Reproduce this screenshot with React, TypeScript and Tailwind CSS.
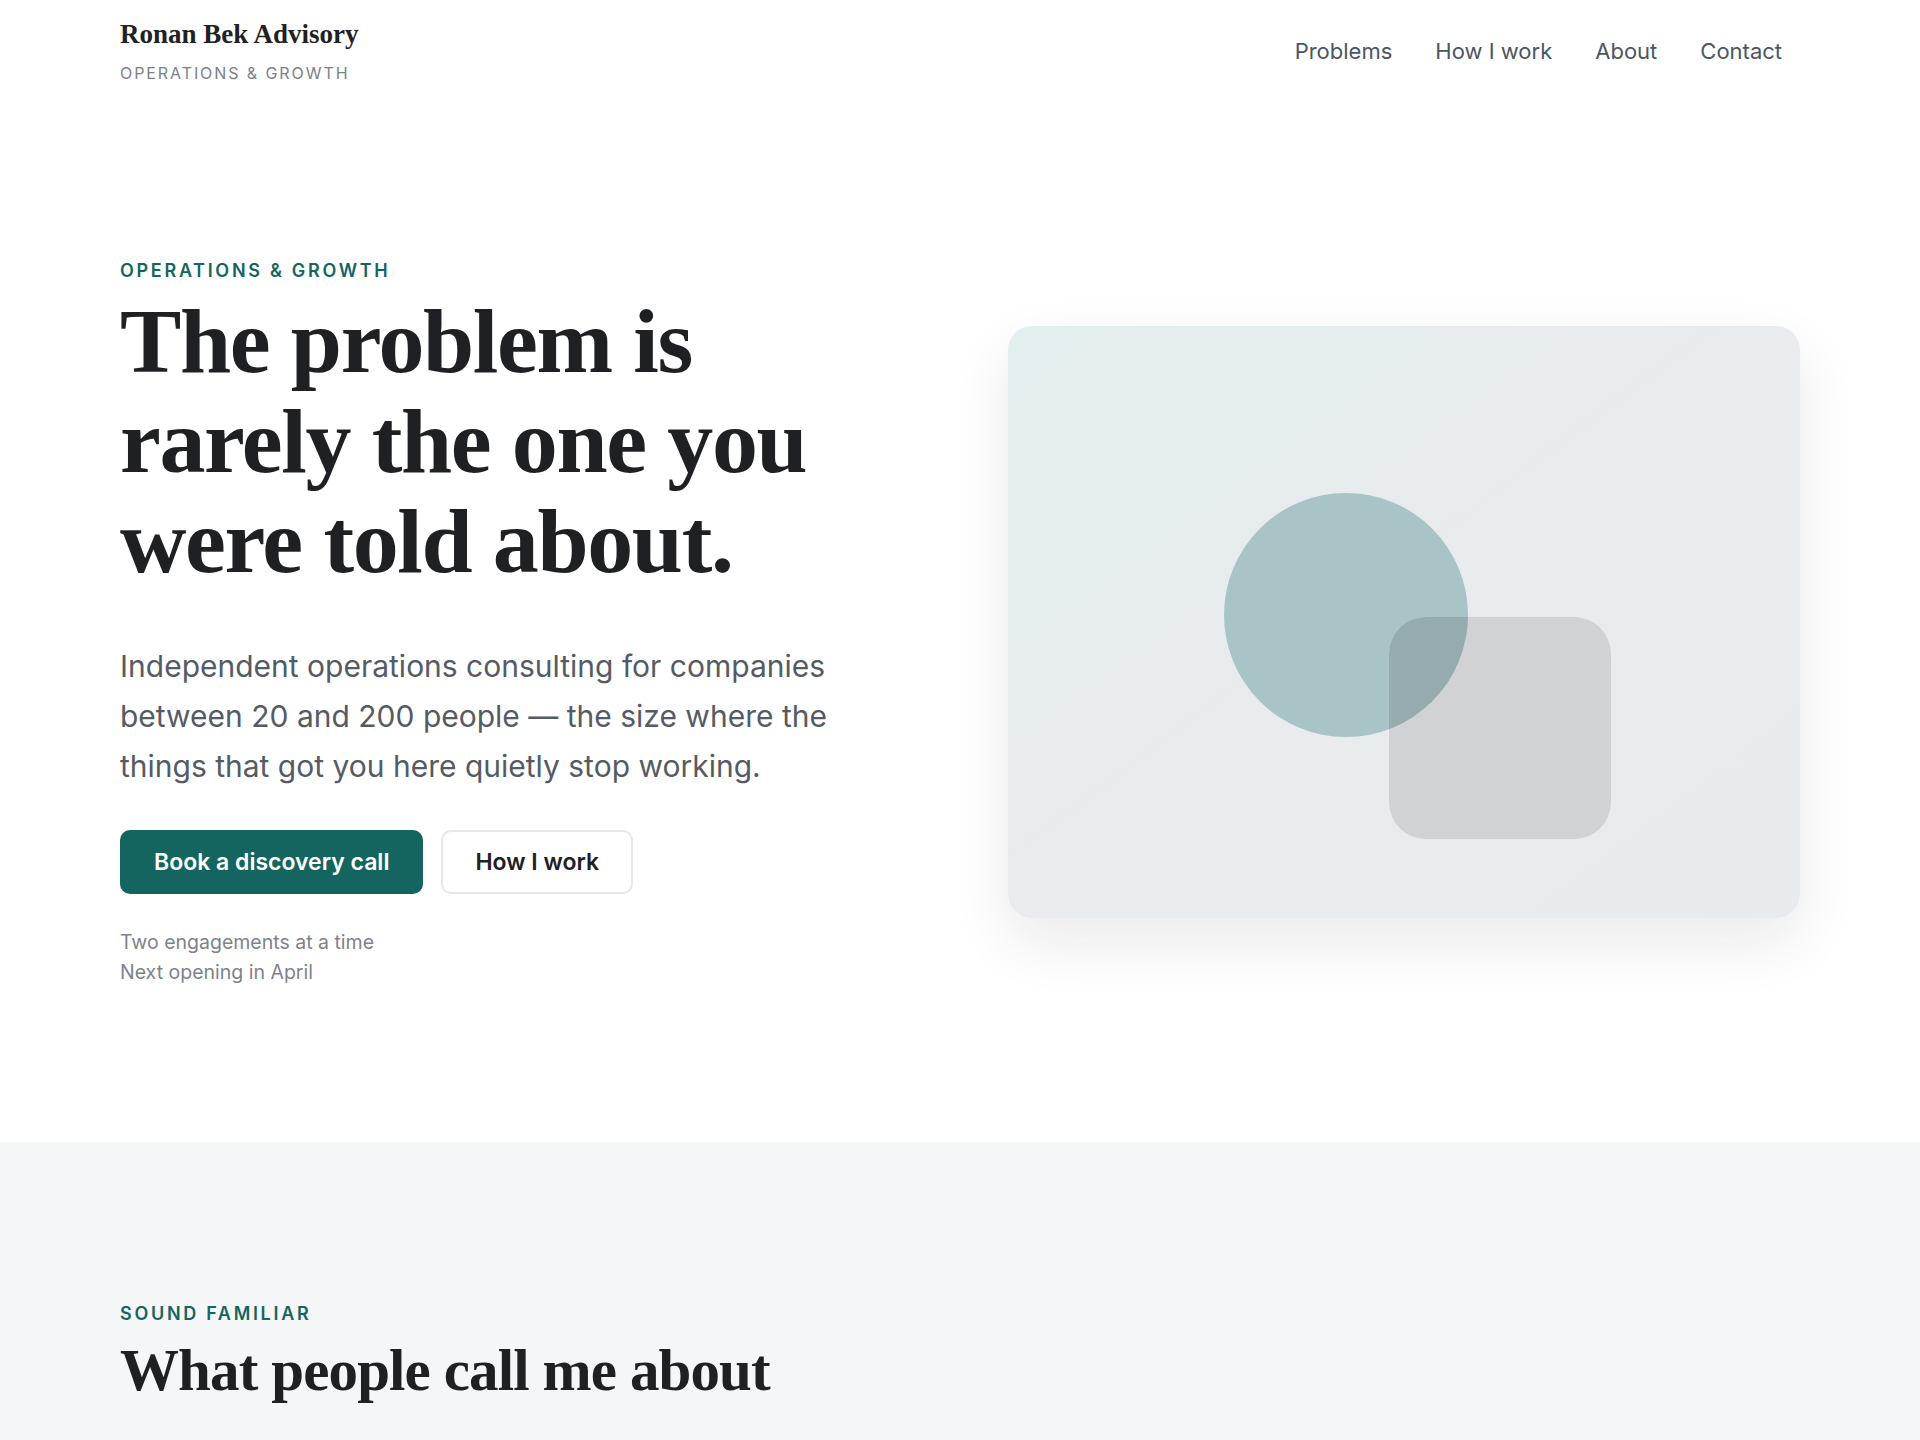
const serif = "font-['Liberation_Serif','Times_New_Roman',serif]";
const sans = "font-['Inter','Noto_Sans',sans-serif]";

const navLinks = ["Problems", "How I work", "About", "Contact"];

const Header = () => {
  return (
    <header className="flex items-center justify-between px-[120px] py-[18px]">
      <div className="flex flex-col">
        <span className={`${serif} text-[27px] leading-[32px] font-bold text-[#1f2124]`}>
          Ronan Bek Advisory
        </span>
        <span className="mt-[12px] text-[16px] leading-[22px] tracking-[0.12em] text-[#7b8189]">
          OPERATIONS &amp; GROWTH
        </span>
      </div>

      <nav className="flex items-center gap-[43px] pr-[18px]">
        {navLinks.map((link) => (
          <a key={link} href="#" className="text-[22px] text-[#4b5563]">
            {link}
          </a>
        ))}
      </nav>
    </header>
  );
};

const Illustration = () => {
  return (
    <svg width="792" height="592" viewBox="0 0 792 592" className="block">
      <defs>
        <clipPath id="sq">
          <rect x="381" y="291" width="222" height="222" rx="37" />
        </clipPath>
      </defs>
      <circle cx="338" cy="289" r="122" fill="#a8c4c7" />
      <rect x="381" y="291" width="222" height="222" rx="37" fill="#d0d2d6" />
      <circle cx="338" cy="289" r="122" fill="#95abae" clipPath="url(#sq)" />
    </svg>
  );
};

const Hero = () => {
  return (
    <section className="grid grid-cols-2 items-center gap-24 px-[120px] py-[155px]">
      <div className="flex flex-col">
        <span className="mt-[2px] text-[18px] leading-[24px] font-semibold tracking-[0.15em] text-[#14655f]">
          OPERATIONS &amp; GROWTH
        </span>
        <h1 className={`${serif} mt-[8px] text-[92px] leading-[100px] font-bold tracking-[-0.015em] text-[#1e2023]`}>
          The problem is
          <br />
          rarely the one you
          <br />
          were told about.
        </h1>
        <p className="mt-[50px] max-w-[720px] text-[30px] leading-[50px] text-[#555b64]">
          Independent operations consulting for companies between 20 and 200
          people — the size where the things that got you here quietly stop
          working.
        </p>

        <div className="mt-[39px] flex gap-[18px]">
          <button className="h-[64px] rounded-[10px] bg-[#14655f] px-[34px] text-[23px] font-semibold text-white">
            Book a discovery call
          </button>
          <button className="h-[64px] rounded-[10px] border-2 border-[#e5e7eb] bg-white px-[32px] text-[23px] font-semibold text-[#1e2023]">
            How I work
          </button>
        </div>

        <div className="mt-[33px] flex flex-col text-[19.5px] leading-[30px] text-[#7d838b]">
          <span>Two engagements at a time</span>
          <span>Next opening in April</span>
        </div>
      </div>

      <div className="overflow-hidden rounded-[24px] bg-gradient-to-br from-[#e2eeef] via-[#e9ebee] to-[#e8ebee] shadow-[0_24px_60px_rgba(17,24,39,0.09)]">
        <Illustration />
      </div>
    </section>
  );
};

const Problems = () => {
  return (
    <section className="bg-[#f5f6f8] px-[120px] pt-[160px] pb-[120px]">
      <span className="block text-[18px] leading-[24px] font-semibold tracking-[0.15em] text-[#14655f]">
        SOUND FAMILIAR
      </span>
      <h2 className={`${serif} mt-[12px] text-[59px] leading-[64px] font-bold tracking-[-0.015em] text-[#1e2023]`}>
        What people call me about
      </h2>
    </section>
  );
};

export default function App() {
  return (
    <div className={`${sans} min-h-screen bg-white`}>
      <Header />
      <Hero />
      <Problems />
    </div>
  );
}
